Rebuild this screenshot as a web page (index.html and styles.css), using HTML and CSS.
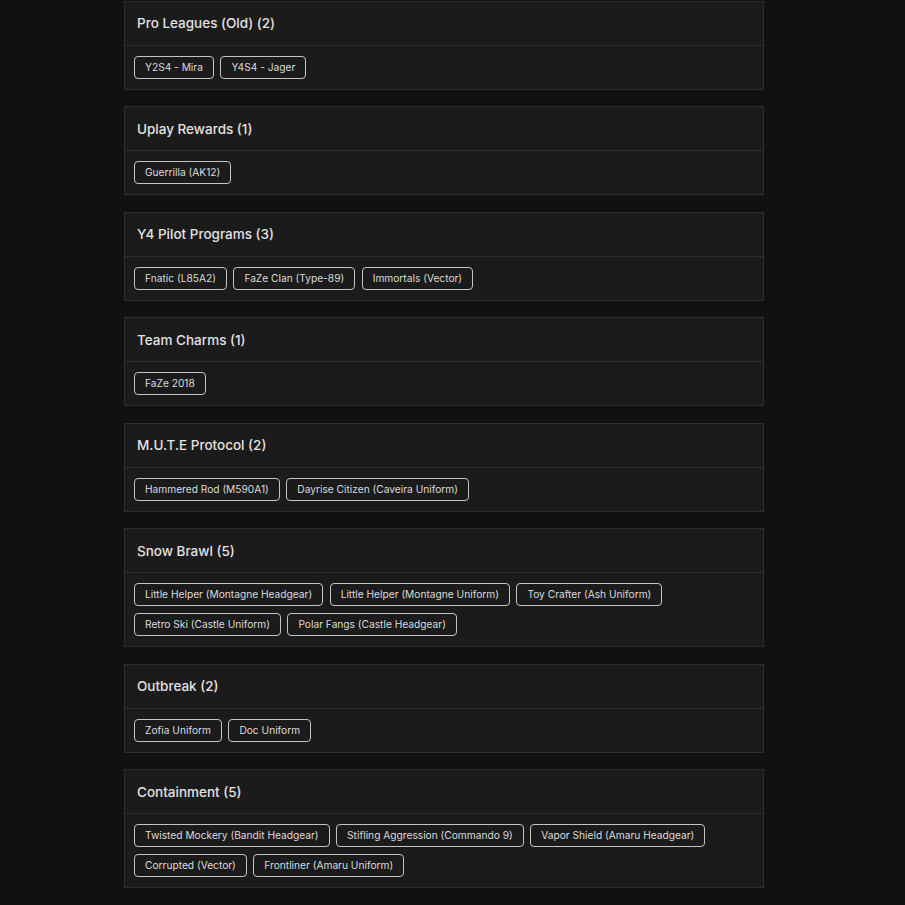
FILE: index.html
```html
<!DOCTYPE html>
<html lang="en">
<head>
    <meta charset="UTF-8">
    <meta name="viewport" content="width=device-width, initial-scale=1.0">
    <title>Event Items</title>
    <link rel="stylesheet" href="styles.css">
</head>
<body>
    <div class="container">
        <div class="card">
            <div class="card-header">Pro Leagues (Old) (2)</div>
            <div class="card-body">
                <span class="tag">Y2S4 - Mira</span>
                <span class="tag">Y4S4 - Jager</span>
            </div>
        </div>
        <div class="card">
            <div class="card-header">Uplay Rewards (1)</div>
            <div class="card-body">
                <span class="tag">Guerrilla (AK12)</span>
            </div>
        </div>
        <div class="card">
            <div class="card-header">Y4 Pilot Programs (3)</div>
            <div class="card-body">
                <span class="tag">Fnatic (L85A2)</span>
                <span class="tag">FaZe Clan (Type-89)</span>
                <span class="tag">Immortals (Vector)</span>
            </div>
        </div>
        <div class="card">
            <div class="card-header">Team Charms (1)</div>
            <div class="card-body">
                <span class="tag">FaZe 2018</span>
            </div>
        </div>
        <div class="card">
            <div class="card-header">M.U.T.E Protocol (2)</div>
            <div class="card-body">
                <span class="tag">Hammered Rod (M590A1)</span>
                <span class="tag">Dayrise Citizen (Caveira Uniform)</span>
            </div>
        </div>
        <div class="card">
            <div class="card-header">Snow Brawl (5)</div>
            <div class="card-body">
                <span class="tag">Little Helper (Montagne Headgear)</span>
                <span class="tag">Little Helper (Montagne Uniform)</span>
                <span class="tag">Toy Crafter (Ash Uniform)</span>
                <span class="tag">Retro Ski (Castle Uniform)</span>
                <span class="tag">Polar Fangs (Castle Headgear)</span>
            </div>
        </div>
        <div class="card">
            <div class="card-header">Outbreak (2)</div>
            <div class="card-body">
                <span class="tag">Zofia Uniform</span>
                <span class="tag">Doc Uniform</span>
            </div>
        </div>
        <div class="card">
            <div class="card-header">Containment (5)</div>
            <div class="card-body">
                <span class="tag">Twisted Mockery (Bandit Headgear)</span>
                <span class="tag">Stifling Aggression (Commando 9)</span>
                <span class="tag">Vapor Shield (Amaru Headgear)</span>
                <span class="tag">Corrupted (Vector)</span>
                <span class="tag">Frontliner (Amaru Uniform)</span>
            </div>
        </div>
        <div class="card card-empty"></div>
    </div>
</body>
</html>
```

FILE: styles.css
```css
html, body {
    margin: 0;
    background-color: #111111;
    overflow: hidden;
}
body {
    font-family: Inter, "Noto Sans", Arial, sans-serif;
    color: #e2e2e2;
    padding: 0.5px 0 0 124px;
}
.container {
    width: 640px;
}
.card {
    background-color: #1b1b1b;
    border: 1px solid #2e2e2e;
    margin-bottom: 16.5px;
}
.card-empty {
    height: 60px;
}
.card-header {
    height: 43px;
    display: flex;
    align-items: center;
    padding: 0 12px;
    font-size: 13.5px;
    font-weight: 500;
    border-bottom: 1px solid #2e2e2e;
}
.card-body {
    display: flex;
    flex-wrap: wrap;
    gap: 7px 6.5px;
    padding: 10px 9px;
}
.tag {
    height: 23px;
    box-sizing: border-box;
    line-height: 21px;
    padding: 0 10px;
    font-size: 10.2px;
    color: #dcdcdc;
    border: 1px solid #c4c4c4;
    border-radius: 4px;
}
```
